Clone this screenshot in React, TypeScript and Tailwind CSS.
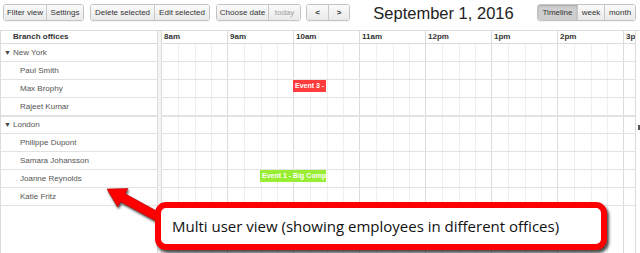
import type { ReactNode } from "react";

const hours = ["8am", "9am", "10am", "11am", "12pm", "1pm", "2pm", "3pm"];

type Row = { name: string; group?: boolean };

const rows: Row[] = [
  { name: "New York", group: true },
  { name: "Paul Smith" },
  { name: "Max Brophy" },
  { name: "Rajeet Kumar" },
  { name: "London", group: true },
  { name: "Philippe Dupont" },
  { name: "Samara Johansson" },
  { name: "Joanne Reynolds" },
  { name: "Katie Fritz" },
];

const Btn = ({
  children,
  className = "",
  active = false,
  muted = false,
}: {
  children: ReactNode;
  className?: string;
  active?: boolean;
  muted?: boolean;
}) => (
  <div
    className={`h-full flex items-center justify-center border-l border-[#c8c8c8] first:border-l-0 ${
      active
        ? "bg-[#cfcfcf] shadow-[inset_0_1px_2px_rgba(0,0,0,0.2)]"
        : "bg-gradient-to-b from-[#fbfbfb] to-[#e9e9e9]"
    } ${muted ? "text-[#a0a0a0]" : "text-[#333]"} ${className}`}
  >
    {children}
  </div>
);

const Group = ({ children, className = "" }: { children: ReactNode; className?: string }) => (
  <div
    className={`flex h-[17px] border border-[#c4c4c4] rounded-[3px] overflow-hidden shadow-[0_1px_1px_rgba(0,0,0,0.05)] ${className}`}
  >
    {children}
  </div>
);

const Toolbar = () => (
  <div className="h-[30px] flex items-start pt-[4px] pl-[3px] pr-[4px] text-[8px]">
    <Group>
      <Btn className="w-[42px]">Filter view</Btn>
      <Btn className="w-[37px]">Settings</Btn>
    </Group>
    <Group className="ml-[6px]">
      <Btn className="w-[63px]">Delete selected</Btn>
      <Btn className="w-[55px]">Edit selected</Btn>
    </Group>
    <Group className="ml-[6px]">
      <Btn className="w-[51px]">Choose date</Btn>
      <Btn className="w-[32px]" muted>
        today
      </Btn>
    </Group>
    <Group className="ml-[5px]">
      <Btn className="w-[21px] font-bold">&lt;</Btn>
      <Btn className="w-[21px] font-bold">&gt;</Btn>
    </Group>
    <div className="flex-1 text-center text-[16.5px] leading-[20px] text-[#222] -mt-[1px]">
      September 1, 2016
    </div>
    <Group>
      <Btn className="w-[39px]" active>
        Timeline
      </Btn>
      <Btn className="w-[27px]">week</Btn>
      <Btn className="w-[31px]">month</Btn>
    </Group>
  </div>
);

const Arrow = () => (
  <svg
    className="absolute left-0 top-0 w-[640px] h-[253px] pointer-events-none drop-shadow-[1px_2px_1px_rgba(0,0,0,0.65)]"
    viewBox="0 0 640 253"
  >
    <polygon
      points="107,189 128,188.5 125.2,193.8 164,215 159.6,223 120.6,201.8 117.6,207"
      fill="#ff0000"
      stroke="#b00000"
      strokeWidth="0.6"
      strokeLinejoin="round"
    />
  </svg>
);

export default function App() {
  return (
    <div className="relative w-[640px] h-[253px] overflow-hidden bg-white font-['Liberation_Sans',Arial,sans-serif]">
      <Toolbar />

      <div className="flex h-[223px] border-t border-l border-[#dcdcdc]">
        {/* resource column */}
        <div className="w-[157px] shrink-0 border-r border-[#dcdcdc] text-[8px] text-[#555]">
          <div className="h-[13px] border-b border-[#dcdcdc] flex items-center pl-[12px] font-bold text-[#333]">
            Branch offices
          </div>
          {rows.map((r) =>
            r.group ? (
              <div
                key={r.name}
                className={`h-[18px] border-b border-[#e2e2e2] flex items-center ${
                  r.name === "London" ? "border-t" : ""
                }`}
              >
                <span className="w-[12px] shrink-0 pl-[3px] text-[7px] leading-[8px] text-[#444]">▼</span>
                {r.name}
              </div>
            ) : (
              <div key={r.name} className="h-[18px] border-b border-[#e2e2e2] flex items-center pl-[19px]">
                {r.name}
              </div>
            )
          )}
        </div>

        <div className="w-[3px] shrink-0 bg-[#f4f4f4]" />

        {/* timeline */}
        <div className="w-[475px] shrink-0 overflow-hidden border-r border-[#dcdcdc]">
          <div className="w-[528px]">
            <div className="flex h-[13px] border-b border-[#dcdcdc]">
              {hours.map((h) => (
                <div
                  key={h}
                  className="w-[66px] shrink-0 border-l border-[#dcdcdc] pl-[2px] text-[8px] font-bold text-[#333] leading-[12px]"
                >
                  {h}
                </div>
              ))}
            </div>

            <div className="relative h-[209px]">
              <div className="absolute inset-0 flex">
                {hours.map((h) => (
                  <div key={h} className="w-[66px] shrink-0 flex border-l border-[#dcdcdc]">
                    <div className="w-[16px]" />
                    <div className="w-[17px] border-l border-[#efefef]" />
                    <div className="w-[16px] border-l border-[#efefef]" />
                    <div className="w-[16px] border-l border-[#efefef]" />
                  </div>
                ))}
              </div>

              <div className="relative">
                {rows.map((r) => (
                  <div
                    key={r.name}
                    className={`relative h-[18px] border-b border-[#e2e2e2] ${
                      r.name === "London" ? "border-t" : ""
                    }`}
                  >
                    {r.name === "Max Brophy" && (
                      <div className="absolute left-[132px] top-0 w-[33px] h-[12px] bg-[#ff3b3b] text-white text-[7px] font-bold leading-[12px] pl-[2px] overflow-hidden whitespace-nowrap">
                        Event 3 - Staff meeting
                      </div>
                    )}
                    {r.name === "Joanne Reynolds" && (
                      <div className="absolute left-[99px] top-0 w-[66px] h-[12px] bg-[#99ee33] text-white text-[7px] font-bold leading-[12px] pl-[2px] overflow-hidden whitespace-nowrap">
                        Event 1 - Big Company meeting
                      </div>
                    )}
                  </div>
                ))}
              </div>
            </div>
          </div>
        </div>
      </div>

      <div className="absolute left-[638px] top-[125px] w-[2px] h-[5px] bg-[#555]" />

      <Arrow />

      <div className="absolute left-[155px] top-[202px] w-[452px] h-[48px] border-[6px] border-[#ff0000] rounded-[11px] bg-white shadow-[2px_3px_3px_rgba(0,0,0,0.7)] flex items-center pl-[11px] text-[15px] text-[#111] font-['Open_Sans','Noto_Sans',sans-serif]">
        Multi user view (showing employees in different offices)
      </div>
    </div>
  );
}
